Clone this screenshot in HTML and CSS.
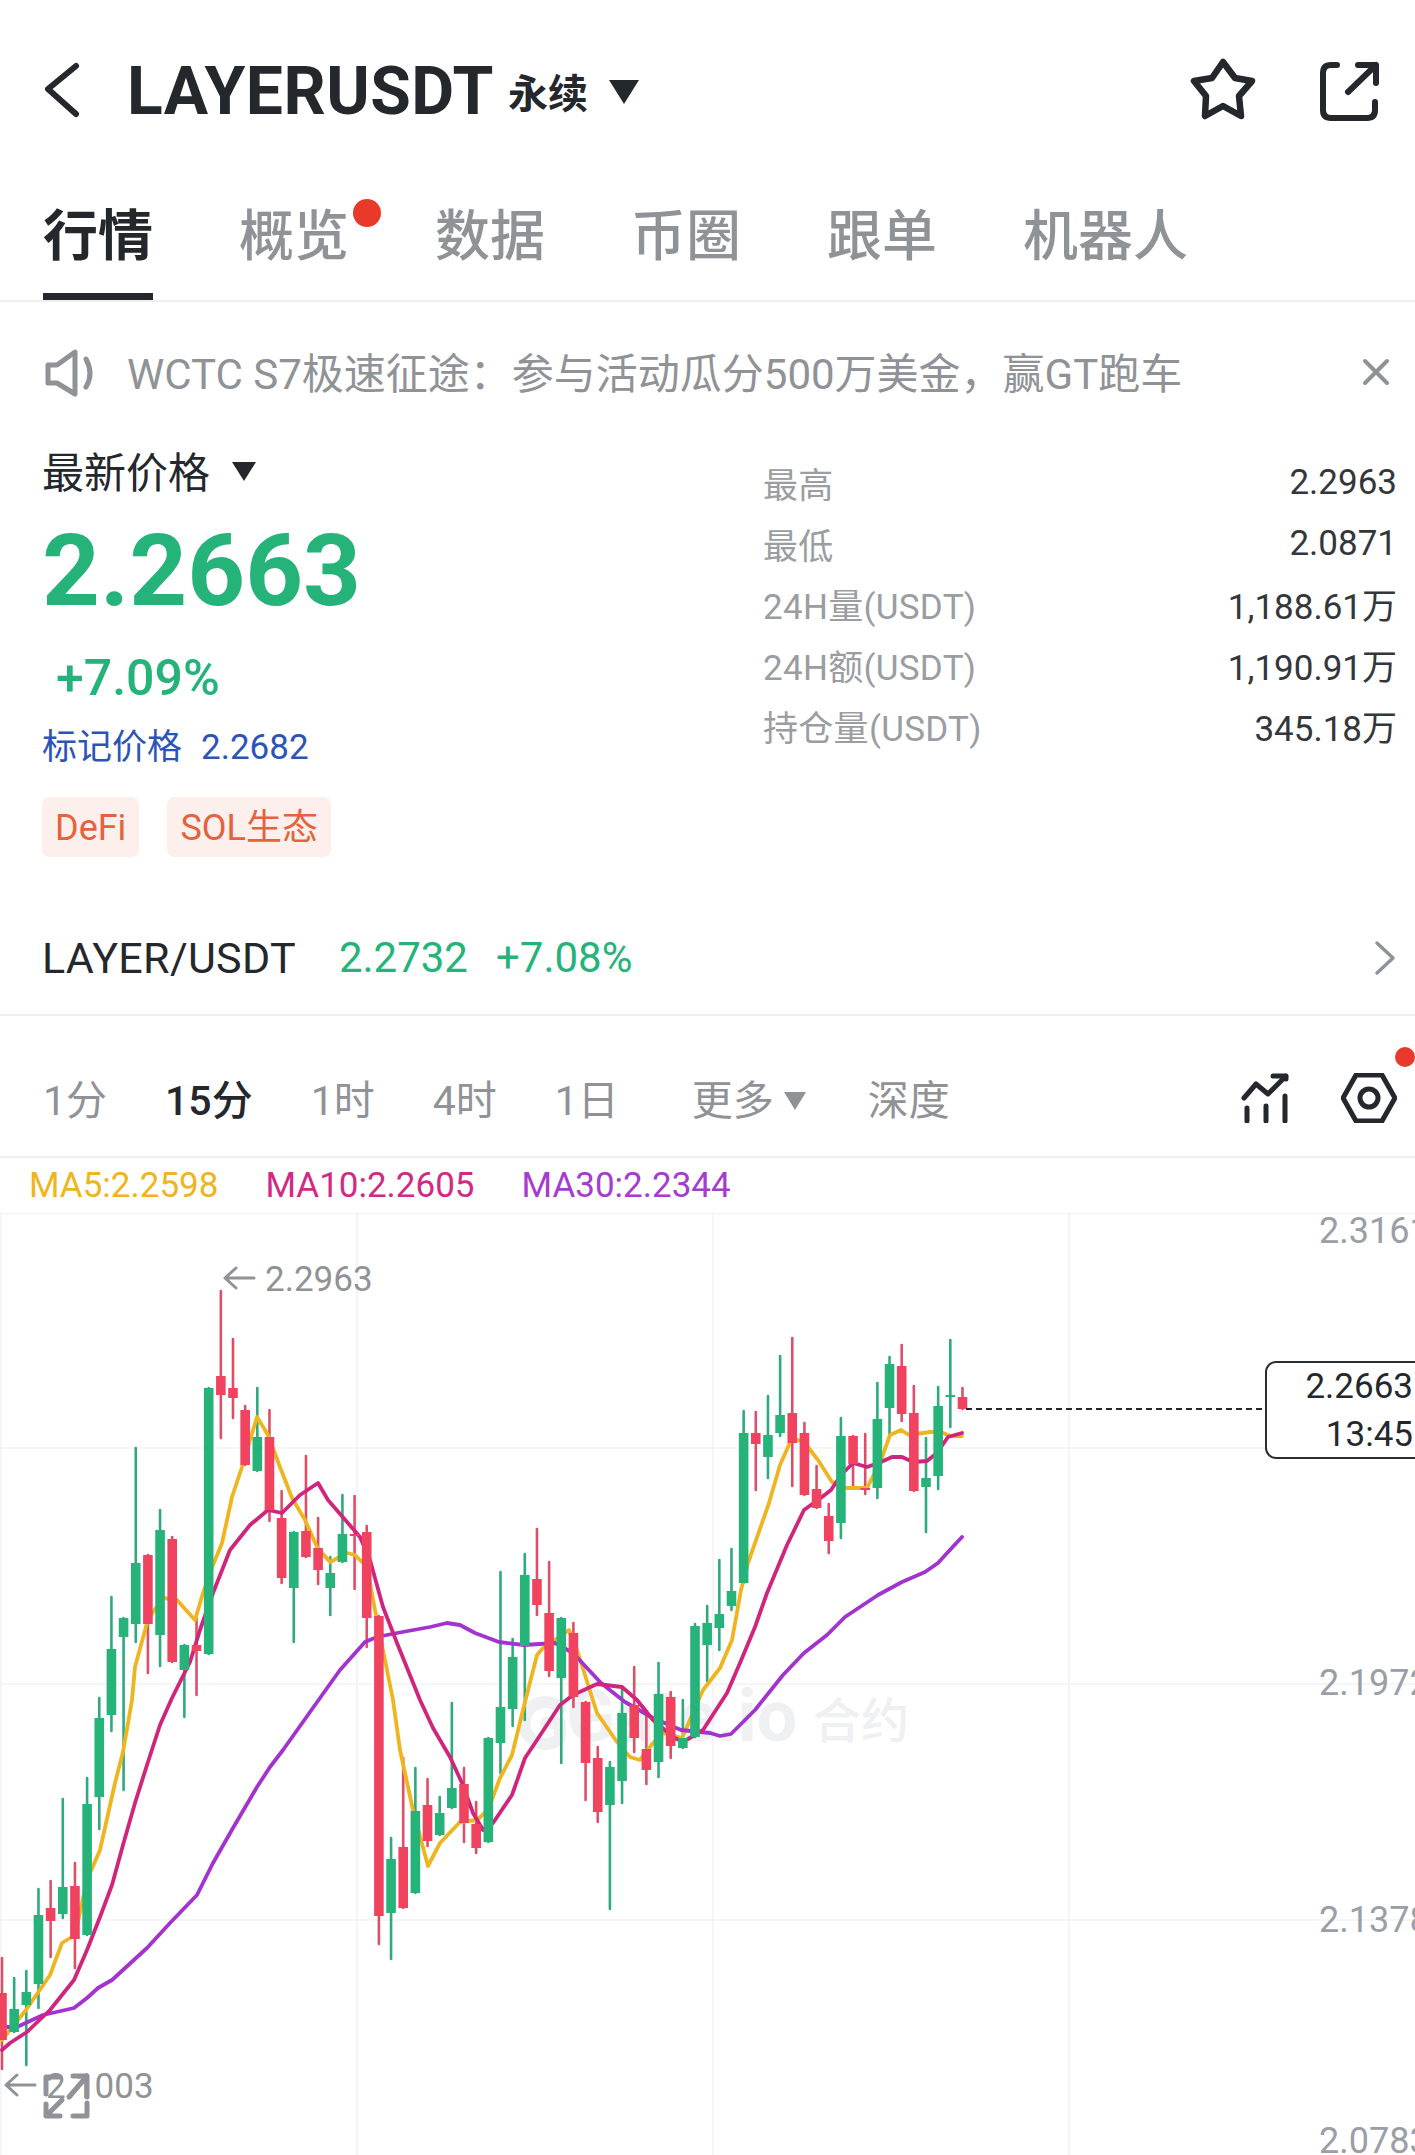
FILE: index.html
```html
<!DOCTYPE html>
<html lang="zh-CN">
<head>
    <meta charset="UTF-8">
    <meta name="viewport" content="width=device-width, initial-scale=1.0">
    <title>LAYERUSDT 永续</title>
    <link rel="stylesheet" href="styles.css">
</head>
<body>
    <!-- Top bar -->
    <div class="topbar">
        <svg class="back-icon" viewBox="0 0 40 60"><path d="M34 5 L6 28 L34 53"/></svg>
        <span class="symbol">LAYERUSDT</span>
        <span class="symbol-type">永续</span>
        <span class="caret caret-big"></span>
        <div class="top-actions">
            <svg class="star-icon" viewBox="0 0 70 70"><path d="M35 8 L47 24 L64 27 L51 42 L53 62 L35 52 L17 62 L18 42 L6 27 L24 24 Z"/></svg>
            <svg class="share-icon" viewBox="0 0 64 64"><path d="M20 6 H14 Q6 6 6 14 V51 Q6 59 14 59 H50 Q58 59 58 51 V43"/><path d="M31 33 L59 6 M41 6 H59 V24"/></svg>
        </div>
    </div>

    <!-- Tabs -->
    <div class="tabs">
        <span class="tab active">行情</span>
        <span class="tab has-dot">概览</span>
        <span class="tab">数据</span>
        <span class="tab">币圈</span>
        <span class="tab">跟单</span>
        <span class="tab">机器人</span>
    </div>

    <!-- Notice -->
    <div class="notice">
        <svg class="speaker-icon" viewBox="0 0 56 50"><path d="M5 18 V36 H14 L32 47 V5 L14 18 Z"/><path d="M43 12 Q51 27 43 40"/></svg>
        <span class="notice-text">WCTC S7极速征途：参与活动瓜分500万美金，赢GT跑车</span>
        <svg class="close-icon" viewBox="0 0 30 30"><path d="M4 4 L26 26 M26 4 L4 26"/></svg>
    </div>

    <!-- Price summary -->
    <div class="summary">
        <div class="price-col">
            <div class="price-label">最新价格 <span class="caret caret-small"></span></div>
            <div class="price">2.2663</div>
            <div class="change">+7.09%</div>
            <div class="mark"><span>标记价格</span><span>2.2682</span></div>
            <div class="tags">
                <span class="tag">DeFi</span>
                <span class="tag">SOL生态</span>
            </div>
        </div>
        <div class="stats">
            <div class="stat"><span>最高</span><b>2.2963</b></div>
            <div class="stat"><span>最低</span><b>2.0871</b></div>
            <div class="stat"><span>24H量(USDT)</span><b>1,188.61万</b></div>
            <div class="stat"><span>24H额(USDT)</span><b>1,190.91万</b></div>
            <div class="stat"><span>持仓量(USDT)</span><b>345.18万</b></div>
        </div>
    </div>

    <!-- Spot pair -->
    <div class="pair">
        <span class="pair-name">LAYER/USDT</span>
        <span class="pair-price">2.2732</span>
        <span class="pair-change">+7.08%</span>
        <svg class="chevron-icon" viewBox="0 0 24 36"><path d="M4 3 L20 18 L4 33"/></svg>
    </div>

    <!-- Periods -->
    <div class="periods">
        <span class="period p1">1分</span>
        <span class="period p15 active">15分</span>
        <span class="period p1h">1时</span>
        <span class="period p4h">4时</span>
        <span class="period p1d">1日</span>
        <span class="period pmore">更多<i class="caret caret-grey"></i></span>
        <span class="period pdepth">深度</span>
        <div class="chart-tools">
            <svg class="indicator-icon" viewBox="0 0 48 50"><path d="M3 25 L15 11 L27 21 L45 3 M32 3 H45 V6"/><path d="M6 35 V48 M25 33 V48 M44 23 V48"/></svg>
            <svg class="setting-icon" viewBox="0 0 56 50"><path d="M2 25 L15 2 H41 L54 25 L41 48 H15 Z"/><circle cx="28" cy="25" r="9"/></svg>
            <span class="tool-dot"></span>
        </div>
    </div>

    <!-- MA legend -->
    <div class="legend">
        <span class="ma5">MA5:2.2598</span>
        <span class="ma10">MA10:2.2605</span>
        <span class="ma30">MA30:2.2344</span>
    </div>

    <!-- Chart, coordinates are page pixels -->
    <svg class="chart" id="chart" viewBox="0 1213 1415 942">
        <g class="grid">
            <path d="M0 1213.5 H1415 M0 1448 H1415 M0 1684 H1415 M0 1920 H1415"/>
            <path d="M1 1213 V2155 M357 1213 V2155 M713 1213 V2155 M1069 1213 V2155"/>
        </g>
        <g class="watermark">
            <path class="wm-logo" d="M560 1708 A21 21 0 1 0 560 1738 L560 1723 L546 1723"/>
            <text class="wm-text" x="566" y="1741">Gate.io</text>
            <text class="wm-cjk" x="813" y="1738">合约</text>
        </g>
        <g id="wicks"></g>
        <g id="lines"></g>
        <g id="bodies"></g>

        <path class="price-dash" d="M966 1409 H1266"/>
        <rect class="price-box" x="1266" y="1362" width="170" height="96" rx="10"/>
        <text class="price-tag" x="1413" y="1398">2.2663</text>
        <text class="price-tag" x="1413" y="1446">13:45</text>

        <text class="axis" x="1319" y="1243">2.3161</text>
        <text class="axis" x="1319" y="1695">2.1972</text>
        <text class="axis" x="1319" y="1932">2.1378</text>
        <text class="axis" x="1319" y="2153">2.0783</text>

        <path class="extreme-arrow" d="M254 1278 H225 M236 1268 L225 1278 L236 1288"/>
        <text class="extreme" x="265" y="1291">2.2963</text>
        <path class="extreme-arrow" d="M35 2085 H6 M17 2075 L6 2085 L17 2095"/>
        <text class="extreme" x="46" y="2098">2.1003</text>

        <g class="fullscreen">
            <path d="M46 2094 V2077 H60"/>
            <path d="M69 2097 L87 2076 M73 2076 H87 V2097"/>
            <path d="M47 2115 L62 2100 M46 2104 V2116 H60"/>
            <path d="M73 2116 H87 V2103"/>
        </g>
    </svg>

    <script src="script.js"></script>
</body>
</html>
```

FILE: styles.css
```css
* {
    box-sizing: border-box;
}
html, body {
    margin: 0;
    padding: 0;
}
body {
    width: 1415px;
    height: 2155px;
    overflow: hidden;
    background-color: #fff;
    color: #24272c;
    font-family: Roboto, "Noto Sans CJK SC", sans-serif;
}
svg path, svg circle {
    fill: none;
    stroke-linecap: round;
    stroke-linejoin: round;
}
.caret {
    display: inline-block;
    width: 0;
    height: 0;
    border-style: solid;
    border-color: #24272c transparent transparent transparent;
}
.caret-big {
    border-width: 24px 15px 0 15px;
    margin-left: 21px;
    margin-top: 2px;
}
.caret-small {
    border-width: 19px 12px 0 12px;
    margin-left: 12px;
    vertical-align: 7px;
}
.caret-grey {
    border-width: 18px 11px 0 11px;
    border-top-color: #8f9296;
    margin-left: 10px;
    vertical-align: 5px;
}

/* top bar */
.topbar {
    display: flex;
    align-items: center;
    height: 182px;
    padding-left: 42px;
    padding-right: 34px;
}
.back-icon {
    width: 40px;
    height: 60px;
    stroke: #24272c;
    stroke-width: 6;
}
.symbol {
    margin-left: 45px;
    font-size: 66px;
    font-weight: 700;
    letter-spacing: 0.5px;
}
.symbol-type {
    margin-left: 14px;
    font-size: 40px;
    font-weight: 700;
}
.top-actions {
    display: flex;
    align-items: center;
    gap: 59px;
    margin-left: auto;
}
.star-icon {
    width: 70px;
    height: 70px;
    margin-top: -5px;
    stroke: #24272c;
    stroke-width: 6.5;
}
.share-icon {
    width: 64px;
    height: 64px;
    stroke: #24272c;
    stroke-width: 6;
}

/* tabs */
.tabs {
    display: flex;
    gap: 86px;
    height: 120px;
    padding-left: 43px;
    border-bottom: 2px solid #eeeff1;
}
.tab {
    position: relative;
    height: 118px;
    padding-top: 17px;
    font-size: 55px;
    line-height: 74px;
    font-weight: 500;
    color: #8f9296;
}
.tab.active {
    color: #24272c;
    font-weight: 700;
    border-bottom: 7px solid #24272c;
}
.has-dot::after {
    content: "";
    position: absolute;
    left: 114px;
    top: 17px;
    width: 28px;
    height: 28px;
    border-radius: 50%;
    background-color: #e8392a;
}

/* notice */
.notice {
    display: flex;
    align-items: center;
    height: 140px;
    padding-left: 43px;
    padding-right: 24px;
    color: #8f9296;
}
.speaker-icon {
    width: 56px;
    height: 50px;
    stroke: #8f9296;
    stroke-width: 5;
}
.notice-text {
    margin-left: 28px;
    margin-bottom: 4px;
    font-size: 42px;
}
.close-icon {
    width: 30px;
    height: 30px;
    margin-left: auto;
    stroke: #8f9296;
    stroke-width: 4;
}

/* summary */
.summary {
    display: flex;
    height: 415px;
    padding-left: 42px;
}
.price-col {
    width: 721px;
    padding-top: 7px;
}
.price-label {
    font-size: 42px;
    line-height: 50px;
}
.price {
    margin-top: 17px;
    font-size: 101px;
    line-height: 110px;
    font-weight: 700;
    color: #25b37a;
}
.change {
    margin-top: 24px;
    padding-left: 14px;
    font-size: 50px;
    line-height: 56px;
    font-weight: 500;
    color: #25b37a;
}
.mark {
    display: flex;
    gap: 19px;
    margin-top: 22px;
    font-size: 35px;
    line-height: 40px;
    color: #2c54b8;
}
.tags {
    display: flex;
    gap: 28px;
    margin-top: 29px;
}
.tag {
    height: 60px;
    padding: 0 13px;
    border-radius: 7px;
    background-color: #fdf0ec;
    color: #e4633f;
    font-size: 36px;
    line-height: 63px;
}
.stats {
    width: 634px;
    padding-top: 10px;
}
.stat {
    display: flex;
    justify-content: space-between;
    align-items: center;
    height: 60.7px;
    font-size: 35px;
    color: #9a9da1;
}
.stat span {
    letter-spacing: 0.3px;
}
.stat b {
    font-size: 35px;
    font-weight: 400;
    color: #33363b;
}

/* spot pair */
.pair {
    display: flex;
    align-items: center;
    height: 115px;
    margin-top: 44px;
    padding-left: 42px;
    padding-right: 18px;
    border-bottom: 2px solid #eeeff1;
    font-size: 43px;
}
.pair-name {
    letter-spacing: 0.3px;
}
.pair-price {
    margin-left: 43px;
    font-size: 42px;
    color: #25b37a;
}
.pair-change {
    margin-left: 28px;
    font-size: 42px;
    color: #25b37a;
}
.chevron-icon {
    width: 24px;
    height: 36px;
    margin-left: auto;
    stroke: #8f9296;
    stroke-width: 3.5;
}

/* periods */
.periods {
    position: relative;
    display: flex;
    align-items: center;
    height: 142px;
    padding-top: 22px;
    padding-left: 43px;
    border-bottom: 2px solid #eeeff1;
}
.period {
    font-size: 41px;
    color: #8f9296;
}
.period.active {
    color: #24272c;
    font-weight: 500;
}
.p15 { margin-left: 58px; }
.p1h { margin-left: 58px; }
.p4h { margin-left: 58px; }
.p1d { margin-left: 58px; }
.pmore { margin-left: 73px; }
.pdepth { margin-left: 62px; }
.chart-tools {
    display: flex;
    align-items: center;
    gap: 52px;
    margin-left: auto;
    padding-top: 2px;
    padding-right: 18px;
}
.indicator-icon {
    width: 48px;
    height: 50px;
    stroke: #24272c;
    stroke-width: 5;
}
.setting-icon {
    width: 56px;
    height: 50px;
    stroke: #24272c;
    stroke-width: 5;
}
.tool-dot {
    position: absolute;
    right: 0;
    top: 31px;
    width: 20px;
    height: 20px;
    border-radius: 50%;
    background-color: #e8392a;
}

/* legend */
.legend {
    display: flex;
    align-items: center;
    height: 55px;
    padding-left: 29px;
    font-size: 35px;
}
.ma5 { color: #efb520; }
.ma10 { margin-left: 47px; color: #d02a84; }
.ma30 { margin-left: 47px; color: #a63bd0; }

/* chart */
.chart {
    display: block;
    width: 1415px;
    height: 942px;
}
.grid path {
    stroke: #f1f2f4;
    stroke-width: 1.5;
}
.wm-logo {
    stroke: #eff0f2;
    stroke-width: 12;
}
.wm-text {
    fill: #eff0f2;
    font-size: 72px;
    font-weight: 700;
}
.wm-cjk {
    fill: #eff0f2;
    font-size: 48px;
    font-weight: 500;
}
.wick-g { stroke: #2fa97f; stroke-width: 2.6; }
.wick-r { stroke: #dc4f68; stroke-width: 2.6; }
.body-g { fill: #25b37a; }
.body-r { fill: #f0435f; }
.line-ma5 { stroke: #efb520; stroke-width: 3.8; }
.line-ma10 { stroke: #d0257c; stroke-width: 3.8; }
.line-ma30 { stroke: #a233cf; stroke-width: 3.8; }
.price-dash {
    stroke: #24272c;
    stroke-width: 2;
    stroke-dasharray: 6 4;
    stroke-linecap: butt !important;
}
.price-box {
    fill: #fff;
    stroke: #2a2d33;
    stroke-width: 2;
}
.price-tag {
    fill: #24272c;
    font-size: 35px;
    text-anchor: end;
}
.axis {
    fill: #9a9ea6;
    font-size: 36px;
}
.extreme {
    fill: #8f9296;
    font-size: 35px;
}
.extreme-arrow {
    stroke: #8f9296;
    stroke-width: 3;
}
.fullscreen path {
    stroke: #8f9296;
    stroke-width: 5;
}
```

FILE: script.js
```js
// candles: colour, body top, body bottom, wick top, wick bottom (page y)
const candles = [
    ['r', 1993, 2040, 1958, 2069], ['g', 2009, 2032, 1978, 2032], ['g', 1992, 2005, 1971, 2065],
    ['g', 1915, 1984, 1889, 2008], ['r', 1908, 1921, 1881, 1957], ['g', 1887, 1914, 1799, 1918],
    ['r', 1886, 1939, 1863, 1968], ['g', 1804, 1935, 1778, 1935], ['g', 1718, 1797, 1698, 1829],
    ['g', 1649, 1715, 1597, 1731], ['g', 1618, 1637, 1618, 1790], ['g', 1563, 1624, 1448, 1642],
    ['r', 1555, 1624, 1555, 1673], ['g', 1530, 1635, 1510, 1666], ['r', 1539, 1662, 1537, 1662],
    ['g', 1645, 1670, 1645, 1717], ['r', 1645, 1651, 1618, 1695], ['g', 1388, 1654, 1388, 1654],
    ['r', 1376, 1395, 1291, 1438], ['r', 1388, 1398, 1339, 1418], ['r', 1410, 1465, 1406, 1465],
    ['g', 1437, 1471, 1388, 1471], ['r', 1437, 1510, 1410, 1521], ['r', 1518, 1578, 1491, 1583],
    ['g', 1532, 1588, 1532, 1642], ['r', 1531, 1557, 1456, 1557], ['r', 1548, 1570, 1518, 1584],
    ['g', 1573, 1588, 1557, 1615], ['g', 1534, 1562, 1495, 1562], ['r', 1534, 1536, 1496, 1589],
    ['r', 1532, 1618, 1526, 1647], ['r', 1616, 1916, 1616, 1944], ['g', 1859, 1913, 1838, 1959],
    ['r', 1847, 1908, 1758, 1908], ['g', 1811, 1893, 1768, 1893], ['r', 1805, 1841, 1779, 1846],
    ['g', 1813, 1835, 1797, 1835], ['g', 1788, 1808, 1703, 1808], ['r', 1784, 1823, 1768, 1842],
    ['r', 1824, 1848, 1802, 1853], ['g', 1738, 1842, 1738, 1842], ['g', 1707, 1743, 1572, 1773],
    ['g', 1657, 1709, 1639, 1726], ['g', 1575, 1646, 1554, 1720], ['r', 1579, 1605, 1529, 1615],
    ['r', 1613, 1671, 1562, 1676], ['g', 1618, 1678, 1618, 1763], ['r', 1633, 1697, 1623, 1707],
    ['r', 1702, 1763, 1702, 1800], ['r', 1758, 1812, 1747, 1822], ['g', 1767, 1805, 1762, 1909],
    ['g', 1713, 1781, 1687, 1803], ['r', 1705, 1738, 1667, 1752], ['r', 1749, 1770, 1715, 1784],
    ['g', 1694, 1762, 1663, 1777], ['r', 1697, 1746, 1692, 1758], ['g', 1738, 1748, 1700, 1748],
    ['g', 1626, 1737, 1624, 1737], ['g', 1623, 1645, 1606, 1681], ['g', 1614, 1628, 1560, 1650],
    ['g', 1591, 1606, 1549, 1610], ['g', 1433, 1583, 1411, 1583], ['r', 1433, 1444, 1412, 1490],
    ['g', 1435, 1457, 1396, 1478], ['g', 1415, 1433, 1356, 1436], ['r', 1413, 1443, 1338, 1486],
    ['r', 1433, 1495, 1423, 1495], ['r', 1489, 1508, 1466, 1508], ['r', 1516, 1541, 1504, 1553],
    ['g', 1436, 1523, 1418, 1538], ['r', 1436, 1464, 1436, 1488], ['r', 1488, 1490, 1434, 1494],
    ['g', 1419, 1488, 1383, 1498], ['g', 1364, 1408, 1357, 1437], ['r', 1366, 1414, 1345, 1421],
    ['r', 1413, 1491, 1386, 1491], ['g', 1478, 1487, 1438, 1532], ['g', 1406, 1476, 1387, 1489],
    ['g', 1395, 1397, 1340, 1427], ['r', 1397, 1409, 1388, 1409]
];

const ma5 = [[2,2040],[26,2010],[50,1975],[62,1943],[75,1935],[87,1880],[100,1850],[115,1783],[123,1752],[132,1700],[135,1667],[147,1623],[153,1612],[163,1598],[177,1600],[195,1620],[203,1593],[213,1565],[222,1543],[232,1497],[242,1467],[257,1417],[268,1435],[280,1467],[292,1498],[305,1520],[317,1547],[330,1562],[347,1553],[355,1555],[367,1567],[375,1610],[383,1650],[393,1700],[400,1750],[413,1810],[428,1866],[440,1843],[460,1822],[477,1820],[488,1810],[500,1778],[512,1755],[523,1710],[537,1655],[543,1648],[569,1630],[578,1653],[597,1713],[617,1742],[630,1757],[640,1760],[653,1743],[663,1733],[682,1738],[703,1690],[720,1668],[732,1640],[741,1590],[748,1563],[769,1503],[780,1465],[792,1438],[804,1442],[818,1460],[832,1482],[846,1488],[867,1488],[880,1463],[890,1435],[901,1430],[909,1435],[930,1432],[941,1432],[950,1436],[962,1436]];

const ma10 = [[2,2050],[10,2043],[27,2032],[50,2010],[74,1980],[87,1950],[100,1917],[112,1885],[123,1845],[135,1803],[147,1765],[160,1725],[172,1698],[190,1662],[200,1630],[213,1593],[230,1550],[250,1525],[268,1510],[282,1513],[300,1495],[318,1483],[328,1500],[360,1537],[370,1560],[383,1607],[397,1643],[420,1700],[433,1728],[450,1757],[462,1783],[473,1813],[483,1830],[493,1823],[512,1795],[525,1758],[537,1740],[560,1705],[573,1695],[597,1684],[622,1687],[637,1700],[653,1720],[673,1737],[683,1742],[703,1730],[727,1693],[740,1663],[755,1627],[767,1593],[787,1545],[804,1510],[822,1497],[831,1490],[841,1475],[853,1463],[867,1467],[881,1462],[892,1457],[902,1457],[913,1462],[927,1461],[937,1453],[948,1437],[962,1433]];

const ma30 = [[2,2027],[17,2027],[43,2015],[74,2008],[87,1998],[98,1988],[112,1980],[147,1948],[170,1923],[197,1895],[213,1863],[233,1828],[257,1787],[270,1767],[283,1750],[320,1698],[340,1670],[365,1642],[377,1637],[397,1633],[430,1627],[447,1623],[460,1625],[475,1633],[499,1642],[524,1645],[555,1643],[573,1653],[601,1683],[625,1702],[653,1718],[681,1730],[710,1733],[720,1736],[731,1734],[755,1710],[783,1675],[804,1653],[827,1635],[845,1617],[878,1595],[902,1582],[925,1572],[938,1563],[948,1552],[962,1537]];

const NS = 'http://www.w3.org/2000/svg';
const step = 12.158;
const bodyWidth = 9.6;

function add(parentId, tag, attrs) {
    const el = document.createElementNS(NS, tag);
    for (const key in attrs) {
        el.setAttribute(key, attrs[key]);
    }
    document.getElementById(parentId).appendChild(el);
}

candles.forEach(function (c, i) {
    const x = 2 + step * i;
    add('wicks', 'path', { d: `M${x} ${c[3]} V${c[4]}`, class: 'wick-' + c[0] });
    add('bodies', 'rect', {
        x: x - bodyWidth / 2,
        y: c[1],
        width: bodyWidth,
        height: c[2] - c[1],
        class: 'body-' + c[0]
    });
});

[[ma5, 'line-ma5'], [ma30, 'line-ma30'], [ma10, 'line-ma10']].forEach(function (line) {
    const d = 'M' + line[0].map(function (p) { return p[0] + ' ' + p[1]; }).join(' L');
    add('lines', 'path', { d: d, class: line[1] });
});
```
